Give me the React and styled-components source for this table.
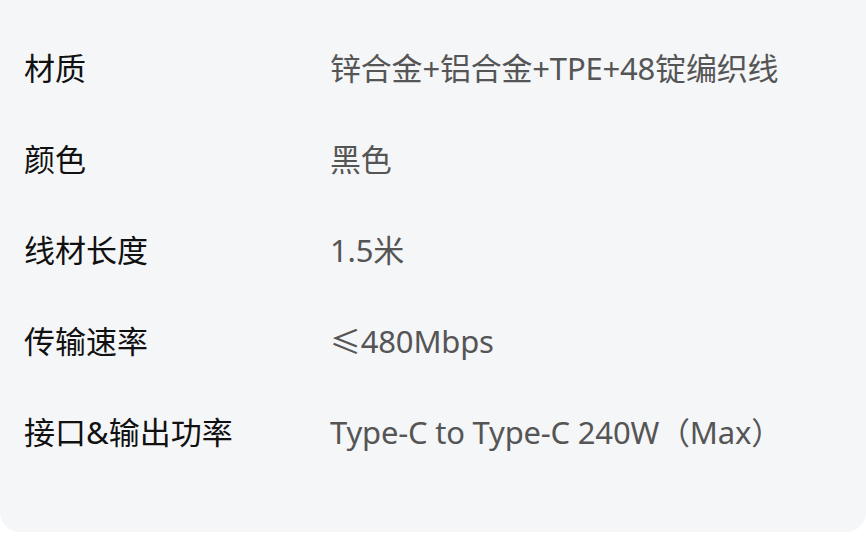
import React from "react";
import styled, { createGlobalStyle } from "styled-components";

const specs = [
  { label: "材质", value: "锌合金+铝合金+TPE+48锭编织线" },
  { label: "颜色", value: "黑色" },
  { label: "线材长度", value: "1.5米" },
  { label: "传输速率", value: "≤480Mbps" },
  { label: "接口&输出功率", value: "Type-C to Type-C 240W（Max）" },
];

const GlobalStyle = createGlobalStyle`
  body {
    margin: 0;
    background: #ffffff;
    font-family: "Noto Sans", "Noto Sans CJK SC", sans-serif;
  }
`;

const Panel = styled.div`
  width: 866px;
  box-sizing: border-box;
  padding: 21px 24px 56px;
  background: #f5f6f8;
  border-radius: 0 0 20px 20px;
`;

const Row = styled.div`
  display: grid;
  grid-template-columns: 306px 1fr;
  align-items: center;
  height: 91px;
  font-size: 31px;
`;

const Label = styled.div`
  color: #111111;
`;

const Value = styled.div`
  color: #555555;
  letter-spacing: -0.2px;
`;

function App() {
  return (
    <>
      <GlobalStyle />
      <Panel>
        {specs.map((s) => (
          <Row key={s.label}>
            <Label>{s.label}</Label>
            <Value>{s.value}</Value>
          </Row>
        ))}
      </Panel>
    </>
  );
}

export default App;
